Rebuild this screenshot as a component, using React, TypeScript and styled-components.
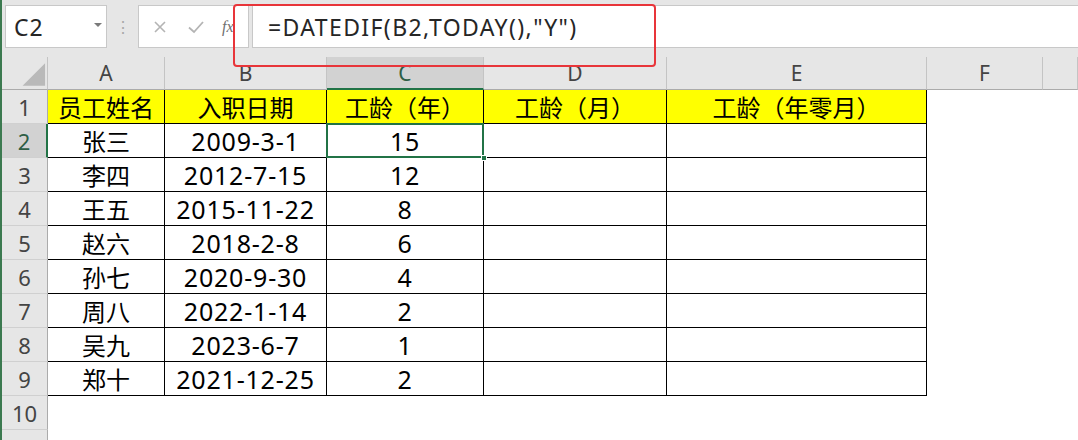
import React from 'react';
import styled, { createGlobalStyle, css } from 'styled-components';

const GlobalStyle = createGlobalStyle`
  html, body {
    margin: 0;
    padding: 0;
    background: #ffffff;
    overflow: hidden;
  }
  * {
    box-sizing: border-box;
  }
`;

const headerCols = ['A', 'B', 'C', 'D', 'E', 'F', ''];

const rows: string[][] = [
  ['员工姓名', '入职日期', '工龄（年）', '工龄（月）', '工龄（年零月）'],
  ['张三', '2009-3-1', '15', '', ''],
  ['李四', '2012-7-15', '12', '', ''],
  ['王五', '2015-11-22', '8', '', ''],
  ['赵六', '2018-2-8', '6', '', ''],
  ['孙七', '2020-9-30', '4', '', ''],
  ['周八', '2022-1-14', '2', '', ''],
  ['吴九', '2023-6-7', '1', '', ''],
  ['郑十', '2021-12-25', '2', '', ''],
  ['', '', '', '', ''],
  ['', '', '', '', ''],
];

const isNumber = (v: string) => /^[\d-]+$/.test(v);

const App: React.FC = () => {
  return (
    <Window>
      <GlobalStyle />
      <FormulaBar>
        <NameBox>
          <NameText>C2</NameText>
          <DropArrow />
        </NameBox>
        <Grip>⋮</Grip>
        <ButtonBox>
          <BarIcon>
            <svg width="14" height="14" viewBox="0 0 14 14">
              <path d="M2 2 L12 12 M12 2 L2 12" stroke="#b4b4b4" strokeWidth="1.6" fill="none" />
            </svg>
          </BarIcon>
          <BarIcon>
            <svg width="18" height="14" viewBox="0 0 18 14">
              <path d="M2 7.5 L7 12 L16 2" stroke="#b4b4b4" strokeWidth="1.8" fill="none" />
            </svg>
          </BarIcon>
          <Fx>fx</Fx>
        </ButtonBox>
        <FormulaInput>=DATEDIF(B2,TODAY(),"Y")</FormulaInput>
        <Highlight />
      </FormulaBar>

      <Sheet>
        <Corner>
          <svg width="46" height="33" viewBox="0 0 46 33">
            <polygon points="21,29 44,29 44,6" fill="#b9b9b9" />
          </svg>
        </Corner>
        {headerCols.map((c, i) => (
          <ColHeader key={i} $active={c === 'C'}>
            {c}
          </ColHeader>
        ))}

        {rows.map((r, ri) => (
          <React.Fragment key={ri}>
            {/* row 11 is only a sliver at the bottom edge, its number is not visible */}
            <RowHeader $active={ri === 1}>{ri < 10 ? ri + 1 : ''}</RowHeader>
            {r.map((v, ci) => (
              <Cell
                key={ci}
                $boxed={ri < 9}
                $yellow={ri === 0}
                $num={isNumber(v)}
                $selected={ri === 1 && ci === 2}
              >
                {v}
                {ri === 1 && ci === 2 && <FillHandle />}
              </Cell>
            ))}
            <Cell $boxed={false} />
            <Cell $boxed={false} />
          </React.Fragment>
        ))}
      </Sheet>
    </Window>
  );
};

const Window = styled.div`
  width: 1078px;
  height: 440px;
  border-left: 2px solid #3c7a50;
  display: flex;
  flex-direction: column;
  font-family: 'Noto Sans', 'Noto Sans CJK SC', sans-serif;
  overflow: hidden;
`;

const FormulaBar = styled.div`
  position: relative;
  height: 57px;
  flex: none;
  background: #e6e6e6;
  display: flex;
  align-items: flex-start;
  padding: 5px 0 0 3px;
`;

const boxStyle = css`
  height: 43px;
  background: #ffffff;
  border: 1px solid #c8c8c8;
  display: flex;
  align-items: center;
`;

const NameBox = styled.div`
  ${boxStyle};
  width: 102px;
  padding: 0 4px 0 8px;
  justify-content: space-between;
`;

const NameText = styled.span`
  font-family: 'Noto Sans', sans-serif;
  font-size: 23px;
  letter-spacing: 1px;
  color: #262626;
`;

const DropArrow = styled.span`
  width: 0;
  height: 0;
  border-left: 4px solid transparent;
  border-right: 4px solid transparent;
  border-top: 4px solid #7a7a7a;
  margin-top: -4px;
`;

const Grip = styled.div`
  width: 31px;
  height: 43px;
  display: flex;
  align-items: center;
  justify-content: center;
  color: #a8a8a8;
  font-size: 16px;
`;

const ButtonBox = styled.div`
  ${boxStyle};
  width: 111px;
  padding-left: 14px;
  gap: 20px;
`;

const BarIcon = styled.span`
  display: flex;
  align-items: center;
`;

const Fx = styled.span`
  font-family: 'Liberation Serif', serif;
  font-style: italic;
  font-size: 16px;
  color: #707070;
  margin-left: -3px;
`;

const FormulaInput = styled.div`
  ${boxStyle};
  flex: 1;
  margin-left: 3px;
  border-right: none;
  padding-left: 15px;
  font-family: 'Noto Sans', sans-serif;
  font-size: 23px;
  letter-spacing: 1.4px;
  color: #262626;
`;

const Highlight = styled.div`
  position: absolute;
  left: 231px;
  top: 4px;
  width: 423px;
  height: 63px;
  border: 2px solid #e8353a;
  border-radius: 4px;
  pointer-events: none;
  z-index: 5;
`;

const Sheet = styled.div`
  display: grid;
  grid-template-columns: 46px 117px 162px 157px 183px 260px 116px 1fr;
  grid-template-rows: 33px repeat(11, 34px);
  background: #ffffff;
`;

const Corner = styled.div`
  background: #e6e6e6;
  border-right: 1px solid #c4c4c4;
  border-bottom: 1px solid #ababab;
  display: flex;
`;

const ColHeader = styled.div<{ $active?: boolean }>`
  background: ${(p) => (p.$active ? '#d2d2d2' : '#e6e6e6')};
  border-right: 1px solid #c4c4c4;
  border-bottom: ${(p) => (p.$active ? '2px solid #217346' : '1px solid #ababab')};
  display: flex;
  align-items: center;
  justify-content: center;
  font-family: 'Noto Sans', sans-serif;
  font-size: 21px;
  color: ${(p) => (p.$active ? '#2e5e44' : '#444444')};
  padding-top: ${(p) => (p.$active ? '1px' : '0')};
`;

const RowHeader = styled.div<{ $active?: boolean }>`
  background: ${(p) => (p.$active ? '#d2d2d2' : '#e6e6e6')};
  border-right: ${(p) => (p.$active ? '2px solid #217346' : '1px solid #ababab')};
  border-bottom: 1px solid #d0d0d0;
  display: flex;
  align-items: center;
  justify-content: center;
  font-family: 'Noto Sans', sans-serif;
  font-size: 22px;
  color: ${(p) => (p.$active ? '#2e5e44' : '#444444')};
`;

const Cell = styled.div<{
  $boxed?: boolean;
  $yellow?: boolean;
  $selected?: boolean;
  $num?: boolean;
}>`
  position: relative;
  background: ${(p) => (p.$yellow ? '#ffff00' : '#ffffff')};
  border-right: ${(p) => (p.$boxed ? '1px solid #000' : 'none')};
  border-bottom: ${(p) => (p.$boxed ? '1px solid #000' : 'none')};
  display: flex;
  align-items: center;
  justify-content: center;
  font-family: ${(p) => (p.$num ? "'Noto Sans', sans-serif" : "'Noto Sans CJK SC', sans-serif")};
  font-size: ${(p) => (p.$num ? '25px' : '24px')};
  letter-spacing: ${(p) => (p.$num ? '0.8px' : '0')};
  color: #000;
  white-space: nowrap;
  ${(p) =>
    p.$selected &&
    css`
      &::after {
        content: '';
        position: absolute;
        left: -1px;
        top: -1px;
        right: -1px;
        bottom: -1px;
        border: 2px solid #217346;
        pointer-events: none;
      }
    `}
`;

const FillHandle = styled.span`
  position: absolute;
  right: -4px;
  bottom: -4px;
  width: 6px;
  height: 6px;
  background: #217346;
  border: 1px solid #ffffff;
  z-index: 2;
`;

export default App;
